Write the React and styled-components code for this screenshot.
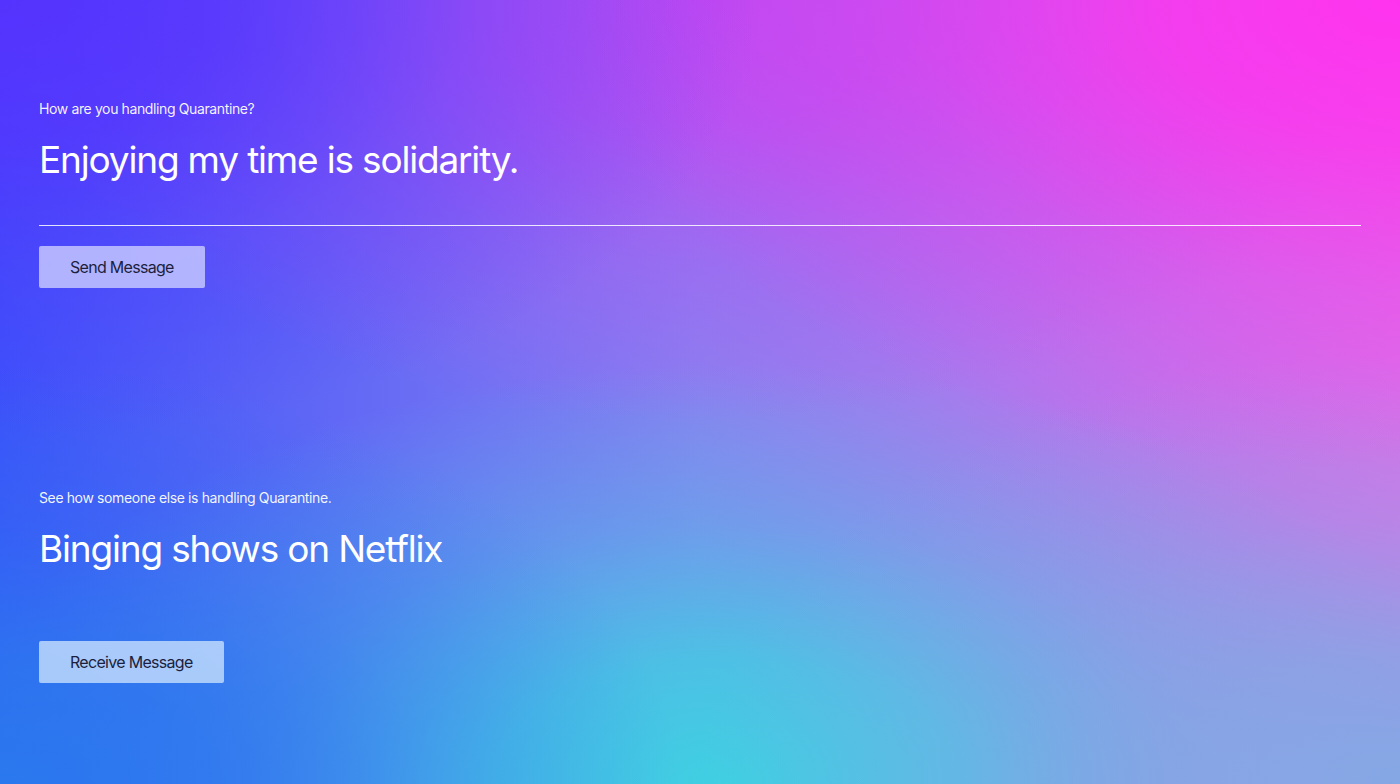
import React from 'react';
import styled, { createGlobalStyle } from 'styled-components';

const GlobalStyle = createGlobalStyle`
  html, body {
    margin: 0;
    padding: 0;
  }
  body {
    font-family: Inter, "Noto Sans", "Liberation Sans", sans-serif;
  }
`

// soft colour blob anchored at an edge point of the page
const blob = (x, y, w, h, rgb) =>
  `radial-gradient(ellipse ${w}px ${h}px at ${x} ${y}, rgba(${rgb}, 1) 0%, rgba(${rgb}, 0.8) 30%, rgba(${rgb}, 0.35) 62%, rgba(${rgb}, 0) 100%)`

const Page = styled.div`
  width: 1400px;
  height: 784px;
  box-sizing: border-box;
  padding: 99px 39px 0 39px;
  overflow: hidden;
  background:
    ${blob('0%', '0%', 760, 440, '85, 51, 254')},
    ${blob('100%', '0%', 820, 470, '255, 51, 238')},
    ${blob('50%', '0%', 700, 420, '184, 76, 242')},
    ${blob('0%', '100%', 680, 420, '42, 120, 238')},
    ${blob('100%', '100%', 700, 430, '132, 168, 228')},
    ${blob('52%', '100%', 780, 420, '62, 208, 226')},
    linear-gradient(to right, #3c52fa 0%, #8a80f0 50%, #d870e8 100%);
  color: #ffffff;
`

const Section = styled.section`
  display: flex;
  flex-direction: column;
  align-items: flex-start;
  margin-top: ${p => p.$offset || 0}px;
`

const Label = styled.div`
  font-size: 14px;
  line-height: 20px;
  letter-spacing: -0.38px;
  color: rgba(255, 255, 255, 0.95);
`

const Field = styled.div`
  align-self: stretch;
  box-sizing: border-box;
  height: ${p => p.$height}px;
  margin-top: 18px;
  border-bottom: 1px solid ${p => (p.$underline ? 'rgba(255, 255, 255, 0.85)' : 'transparent')};
`

const Answer = styled.div`
  font-size: 37px;
  line-height: 46px;
  font-weight: 400;
  letter-spacing: -1.18px;
  color: #ffffff;
`

const Button = styled.button`
  margin-top: 20px;
  height: 42px;
  padding: 0 31px;
  border: none;
  border-radius: 2px;
  background: ${p => p.$tint};
  color: #1c1f3d;
  font-family: Inter, "Noto Sans", "Liberation Sans", sans-serif;
  font-size: 16px;
  letter-spacing: -0.7px;
  cursor: pointer;
`

export default function App() {
  return (
    <>
      <GlobalStyle />
      <Page>
        <Section>
          <Label>How are you handling Quarantine?</Label>
          <Field $height={89} $underline>
            <Answer>Enjoying my time is solidarity.</Answer>
          </Field>
          <Button $tint="rgba(196, 198, 255, 0.85)">Send Message</Button>
        </Section>
        <Section $offset={200}>
          <Label>See how someone else is handling Quarantine.</Label>
          <Field $height={95}>
            <Answer>Binging shows on Netflix</Answer>
          </Field>
          <Button $tint="rgba(186, 214, 252, 0.88)">Receive Message</Button>
        </Section>
      </Page>
    </>
  );
}
